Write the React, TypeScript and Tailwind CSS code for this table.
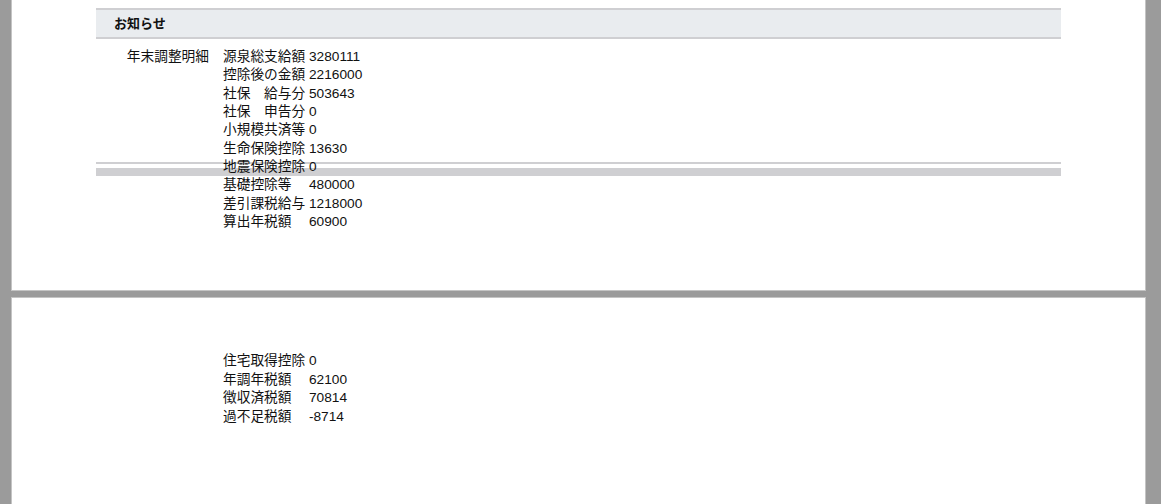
const font = { fontFamily: '"Liberation Sans", "Noto Sans CJK JP", sans-serif' };

type TRow = { label: string; value: string };

const firstPageRows: TRow[] = [
  { label: "源泉総支給額", value: "3280111" },
  { label: "控除後の金額", value: "2216000" },
  { label: "社保　給与分", value: "503643" },
  { label: "社保　申告分", value: "0" },
  { label: "小規模共済等", value: "0" },
  { label: "生命保険控除", value: "13630" },
  { label: "地震保険控除", value: "0" },
  { label: "基礎控除等　", value: "480000" },
  { label: "差引課税給与", value: "1218000" },
  { label: "算出年税額　", value: "60900" },
];

const secondPageRows: TRow[] = [
  { label: "住宅取得控除", value: "0" },
  { label: "年調年税額　", value: "62100" },
  { label: "徴収済税額　", value: "70814" },
  { label: "過不足税額　", value: "-8714" },
];

const DetailRows = ({ rows, title, leading }: { rows: TRow[]; title?: string; leading: string }) => (
  <div className={`relative z-10 grid grid-cols-[127px_1fr] text-[13.7px] text-[#111] ${leading}`}>
    <div className="pr-[14px] text-right">{title}</div>
    <div className="flex flex-col">
      {rows.map((row) => (
        <div key={row.label} className="whitespace-pre">
          {row.label} {row.value}
        </div>
      ))}
    </div>
  </div>
);

export default function App() {
  return (
    <div className="h-[504px] overflow-hidden bg-[#9b9b9b] pl-[11px] pr-[15px]" style={font}>
      {/* page 1 */}
      <div className="relative h-[291px] border-x border-b border-[#c4c4c4] bg-white px-[84px]">
        <div className="pt-[8px]">
          <div className="h-[31px] border-y-2 border-[#cfcfd2] bg-[#e9ecef] pl-[18px] text-[13px] font-bold leading-[27px] text-[#111]">
            お知らせ
          </div>
        </div>
        <div className="pt-[9px]">
          <DetailRows rows={firstPageRows} title="年末調整明細" leading="leading-[18.33px]" />
        </div>
        {/* page break marker drawn behind the text */}
        <div className="absolute left-[84px] right-[84px] top-[162px] h-[2px] bg-[#cfcfd2]" />
        <div className="absolute left-[84px] right-[84px] top-[168px] h-[8px] bg-[#cfcfd2]" />
      </div>

      {/* page 2 */}
      <div className="mt-[6px] h-[220px] border-x border-t border-[#c4c4c4] bg-white px-[84px] pt-[54px]">
        <DetailRows rows={secondPageRows} leading="leading-[18.67px]" />
      </div>
    </div>
  );
}
